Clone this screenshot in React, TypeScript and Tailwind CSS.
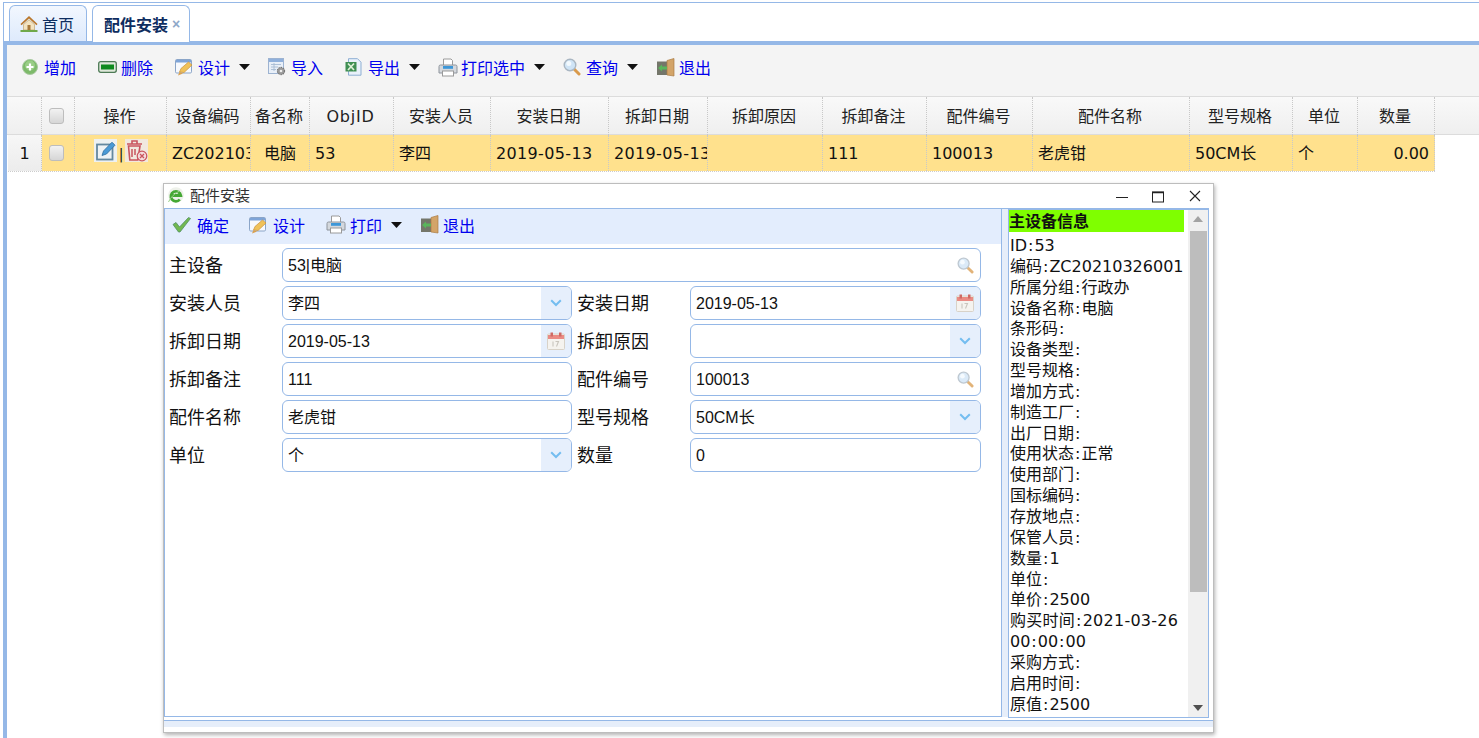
import React from "react";

const Caret = () => (
  <svg width="11" height="6" viewBox="0 0 11 6" className="shrink-0"><path d="M0 0h11L5.500 6z" fill="#111" /></svg>
);
const Home = () => (
  <svg width="18" height="18" viewBox="0 0 18 18"><path d="M9 1 0.500 9l1 1.200L9 3.500l7.500 6.700 1-1.200z" fill="#b9772c" /><path d="M3.500 9.500 9 4.800l5.500 4.700V15h-11z" fill="#f3e3c0" stroke="#b89a60" strokeWidth=".6" /><rect x="7.500" y="10" width="3" height="5" fill="#a8793a" /><path d="M0.500 15h17v2h-17z" fill="#6fa84a" /></svg>
);
const Plus = () => (
  <svg width="16" height="16" viewBox="0 0 16 16"><circle cx="8" cy="8" r="7.500" fill="#7dba6a" stroke="#a9c9a0" /><circle cx="8" cy="6.500" r="5" fill="#a5d593" opacity=".7" /><path d="M8 4.500v7M4.500 8h7" stroke="#fff" strokeWidth="2.200" /></svg>
);
const Minus = () => (
  <svg width="19" height="12" viewBox="0 0 19 12"><rect x=".7" y=".7" width="17.600" height="10.600" rx="2" fill="#dfe8da" stroke="#4d7a55" strokeWidth="1.300" /><rect x="3" y="3.500" width="13" height="5" fill="#0f8a1e" /></svg>
);
const Design = () => (
  <svg width="18" height="18" viewBox="0 0 18 18"><rect x=".5" y="1.500" width="16" height="13.500" rx="1.200" fill="#f7f9fd" stroke="#8ba5c8" /><rect x="1" y="2" width="15" height="2.500" fill="#7ea4d8" /><path d="M4.500 14 6 10.500 13.500 4l3.500 3-8 7.500z" fill="#f0c25a" stroke="#c9923c" strokeWidth=".7" /><path d="M3 17.500l1.500-3.500 3.500 1.500z" fill="#d9a050" /></svg>
);
const ImportI = () => (
  <svg width="18" height="18" viewBox="0 0 18 18"><rect x=".5" y=".5" width="15" height="15" fill="#e8eff8" stroke="#9db3d1" /><rect x="1" y="1" width="14" height="3" fill="#8fb0dc" /><path d="M3 6.500h10M3 9h7M3 11.500h5M6 5v8" stroke="#a7bbd4" strokeWidth=".9" /><circle cx="13" cy="13" r="3.600" fill="#9a9a9a" stroke="#777" strokeDasharray="1.500 .8" strokeWidth="1.100" /><circle cx="13" cy="13" r="1.300" fill="#eee" /></svg>
);
const Excel = () => (
  <svg width="18" height="18" viewBox="0 0 18 18"><path d="M3.500 .7h9l3.500 3.500v13h-12.500z" fill="#e9f1fa" stroke="#8daed3" /><path d="M0.500 4h11v9.500H0.500z" fill="#3f8f52" /><path d="M3 5.500l6 6.500M9 5.500l-6 6.500" stroke="#dff0d8" strokeWidth="1.700" /></svg>
);
const PrintI = () => (
  <svg width="20" height="19" viewBox="0 0 20 19"><path d="M5.500 1h7.500l1.500 1.500V8h-9z" fill="#fff" stroke="#9a9a9a" /><path d="M1 8.500q0-1.500 1.500-1.500h15q1.500 0 1.500 1.500V15H1z" fill="#d4d8dd" stroke="#8e949c" /><rect x="5" y="8" width="10" height="2.800" fill="#3d97d8" /><rect x="4.500" y="13" width="11" height="5" fill="#fff" stroke="#9a9a9a" /></svg>
);
const Search = ({ s = 18, o = 1 }: { s?: number; o?: number }) => (
  <svg width={s} height={s} viewBox="0 0 18 18" opacity={o}><path d="M10.800 10.800 16 16" stroke="#d99a4b" strokeWidth="3" strokeLinecap="round" /><circle cx="7" cy="7" r="5.800" fill="#cfe4f6" stroke="#a9b6c2" strokeWidth="1.400" /><circle cx="5.800" cy="5.500" r="2.500" fill="#f2f9fe" /></svg>
);
const Exit = () => (
  <svg width="19" height="19" viewBox="0 0 19 19"><rect x="1" y="3.500" width="11" height="13.500" fill="#74766a" /><path d="M11 2.500 18 .5V18l-7-1z" fill="#d3a468" stroke="#aa7d45" strokeWidth=".7" /><path d="M2 10l4-3.500v2h5v3H6v2z" fill="#59b55b" /></svg>
);
const Check = () => (
  <svg width="19" height="17" viewBox="0 0 19 17"><path d="M1 8.500l3-2 3.500 4.500L16.500 1.500l2 1L8 16h-1.500z" fill="#73b84f" stroke="#4f8f63" strokeWidth=".8" /></svg>
);
const Edit = () => (
  <svg width="23" height="23" viewBox="0 0 23 23"><rect width="23" height="23" fill="#edf1f2" /><rect x="3" y="5.500" width="15.500" height="15" fill="#eef3f6" stroke="#64889f" strokeWidth="1.800" /><path d="M8 16.500 9.500 12 18 3.200l3 3-8.500 8.800z" fill="#4a9ad6" stroke="#2f6d9e" strokeWidth=".8" /></svg>
);
const Trash = () => (
  <svg width="23" height="23" viewBox="0 0 23 23"><rect width="23" height="23" fill="#f1e9df" /><path d="M2 5h15M7 5V2h5v3" stroke="#c9545e" strokeWidth="1.600" fill="none" /><path d="M3.500 7l1.300 14h8L15 7z" fill="#f1e9df" stroke="#c9545e" strokeWidth="1.600" /><path d="M7 10v8M10 10v6" stroke="#c9545e" strokeWidth="1.500" /><circle cx="17" cy="17" r="4.800" fill="#f4dcdc" stroke="#c9545e" strokeWidth="1.200" /><path d="M15 15l4 4M19 15l-4 4" stroke="#c9545e" strokeWidth="1.300" /></svg>
);
const IE = () => (
  <svg width="16" height="16" viewBox="0 0 16 16"><circle cx="8" cy="8" r="7.800" fill="#eef1ea" /><path d="M2.800 8.500h10A5 5 0 1 0 11.800 12.500" fill="none" stroke="#45a834" strokeWidth="2.800" /><path d="M0.500 15q3-7 11-11" stroke="#9ad08a" fill="none" strokeWidth="1" /></svg>
);
const Calendar = () => (
  <svg width="18" height="18" viewBox="0 0 18 18"><rect x=".5" y="2" width="17" height="15.500" rx="1" fill="#f5f3ef" stroke="#d8d2c8" /><rect x="1" y="3" width="16" height="4" fill="#ea8b84" /><rect x="3.500" y=".5" width="2.500" height="4" fill="#cf6a64" /><rect x="12" y=".5" width="2.500" height="4" fill="#cf6a64" /><path d="M6 9.500v5M8.500 9.500h3l-2 5" stroke="#c9c5bd" strokeWidth="1.100" fill="none" /></svg>
);
const Chevron = () => (
  <svg width="12" height="8" viewBox="0 0 12 8"><path d="M1.200 1.200 6 6l4.800-4.800" stroke="#74bdf0" strokeWidth="2" fill="none" /></svg>
);

const TB = ({ x, icon, label, caret, w = 23 }: { x: number; icon: React.ReactNode; label: string; caret?: boolean; w?: number }) => (
  <div className="absolute top-0 h-full flex items-center text-[16px] text-[#0000ee] whitespace-nowrap" style={{ left: x }}>
    <span className="flex items-center shrink-0" style={{ width: w }}>{icon}</span>
    {label}
    {caret && <span className="ml-[9px] flex"><Caret /></span>}
  </div>
);

const cell = "border-r border-dotted border-[#c8c8c8] overflow-hidden whitespace-nowrap h-full flex items-center";
const txt = `${cell} pt-[2px]`;
const heads = ["", "", "操作", "设备编码", "备名称", "ObjID", "安装人员", "安装日期", "拆卸日期", "拆卸原因", "拆卸备注", "配件编号", "配件名称", "型号规格", "单位", "数量"];

const Field = ({ x, y, w, value, btn }: { x: number; y: number; w: number; value: string; btn?: "search" | "chev" | "cal" }) => (
  <div className="absolute h-[34px] flex items-center bg-white border border-[#95b8e7] rounded-[6px] overflow-hidden text-[16px] text-[#111] [font-family:Liberation_Sans,Noto_Sans_CJK_SC,sans-serif]" style={{ left: x, top: y, width: w }}>
    <span className="pl-[5px] pt-[2px] flex-1 whitespace-nowrap">{value}</span>
    {btn === "search" && <span className="w-[30px] h-full flex items-center justify-center"><Search s={17} o={0.75} /></span>}
    {btn === "chev" && <span className="w-[30px] h-full flex items-center justify-center bg-[#e6effc]"><Chevron /></span>}
    {btn === "cal" && <span className="w-[30px] h-full flex items-center justify-center bg-[#e6effc]"><Calendar /></span>}
  </div>
);

const Label = ({ x, y, t }: { x: number; y: number; t: string }) => (
  <div className="absolute h-[34px] flex items-center text-[18px] text-[#111] whitespace-nowrap" style={{ left: x, top: y - 1 }}>{t}</div>
);

const info = ["ID:53", "编码:ZC20210326001", "所属分组:行政办", "设备名称:电脑", "条形码:", "设备类型:", "型号规格:", "增加方式:", "制造工厂:", "出厂日期:", "使用状态:正常", "使用部门:", "国标编码:", "存放地点:", "保管人员:", "数量:1", "单位:", "单价:2500", "购买时间:2021-03-26", "00:00:00", "采购方式:", "启用时间:", "原值:2500"];

const Colons = ({ t }: { t: string }) => (
  <>
    {t.split(":").map((p, i) => (
      <React.Fragment key={i}>
        {i > 0 && <span className="px-[1px]">:</span>}
        {p}
      </React.Fragment>
    ))}
  </>
);

const Checkbox = () => <div className="w-[15px] h-[16px] rounded-[3px] border border-[#bdbdbd] bg-gradient-to-b from-[#f2f2f2] to-[#d6d6d6]" />;

const gridCols = "grid grid-cols-[34px_33px_92px_84px_59px_84px_97px_118px_99px_115px_104px_106px_157px_103px_65px_77px]";
const yellow = "bg-[#ffe18d]";

export default function App() {
  return (
    <div className="relative w-[1479px] h-[738px] overflow-hidden bg-white [font-family:Noto_Sans_CJK_SC,sans-serif] text-[#222]">
      {/* top and left frame */}
      <div className="absolute left-[3px] right-0 top-[2px] h-px bg-[#95b8e7]" />
      <div className="absolute left-[3px] top-[2px] bottom-0 w-px bg-[#95b8e7]" />
      {/* tabs */}
      <div className="absolute left-[9px] top-[5px] w-[78px] h-[36px] border border-b-0 border-[#95b8e7] rounded-t-[6px] bg-gradient-to-b from-[#f2f7fe] to-[#deeafc] flex items-center text-[16px] text-[#0e2d5f]">
        <span className="ml-[10px] w-[22px] flex"><Home /></span>首页
      </div>
      <div className="absolute left-[92px] top-[5px] w-[98px] h-[37px] border border-b-0 border-[#95b8e7] rounded-t-[6px] bg-white flex items-center text-[16px] font-bold text-[#0e2d5f] z-10">
        <span className="ml-[11px]">配件安装</span><span className="ml-[4px] text-[14px] text-[#8fa8c8] [font-family:Liberation_Sans,sans-serif]">×</span>
      </div>
      {/* main panel */}
      <div className="absolute left-[4px] right-0 top-[41px] h-[4px] bg-[#95b8e7]" />
      <div className="absolute left-[4px] top-[41px] bottom-0 w-[3px] bg-[#95b8e7]" />
      {/* toolbar */}
      <div className="absolute left-[7px] right-0 top-[45px] h-[52px] bg-[#f4f4f4] border-b border-[#dcdcdc]">
        <div className="absolute left-0 right-0 top-[4px] h-[36px]">
          <TB x={15} w={22} icon={<Plus />} label="增加" />
          <TB x={91} icon={<Minus />} label="删除" />
          <TB x={168} icon={<Design />} label="设计" caret />
          <TB x={261} icon={<ImportI />} label="导入" />
          <TB x={338} icon={<Excel />} label="导出" caret />
          <TB x={431} icon={<PrintI />} label="打印选中" caret />
          <TB x={556} icon={<Search />} label="查询" caret />
          <TB x={649} icon={<Exit />} label="退出" />
        </div>
      </div>
      {/* table header */}
      <div className="absolute left-[7px] right-0 top-[97px] h-[38px] bg-gradient-to-b from-[#f9f9f9] to-[#efefef] border-b border-[#dcdcdc]" />
      <div className={`absolute left-[8px] top-[97px] h-[38px] ${gridCols} text-[16px] text-[#222]`}>
        {heads.map((h, i) => (
          <div key={i} className={`${cell} justify-center ${i === 1 ? "pr-[3px]" : "pr-[2px]"} ${i === 1 ? "" : h === "ObjID" ? "pt-[1px] [font-family:DejaVu_Sans,Noto_Sans_CJK_SC,sans-serif] tracking-[0.8px]" : "pb-[2px]"}`}>
            {i === 1 ? <Checkbox /> : h}
          </div>
        ))}
      </div>
      {/* row */}
      <div className={`absolute left-[8px] top-[135px] h-[37px] ${gridCols} text-[16px] text-[#111] [font-family:DejaVu_Sans,Noto_Sans_CJK_SC,sans-serif] border-b border-dotted border-[#ccc]`}>
        <div className={`${txt} justify-center bg-gradient-to-b from-[#f7f7f7] to-[#ececec]`}>1</div>
        <div className={`${cell} justify-center pr-[3px] ${yellow}`}><Checkbox /></div>
        <div className={`${cell} ${yellow} items-start pl-[19px] pt-[4px]`}><Edit /><span className="text-[14px] mt-[5px] w-[8px] text-center">|</span><Trash /></div>
        <div className={`${txt} ${yellow} pl-[5px]`}>ZC20210326001</div>
        <div className={`${txt} ${yellow} justify-center`}>电脑</div>
        <div className={`${txt} ${yellow} pl-[5px]`}>53</div>
        <div className={`${txt} ${yellow} pl-[5px]`}>李四</div>
        <div className={`${txt} ${yellow} pl-[5px] tracking-[0.35px]`}>2019-05-13</div>
        <div className={`${txt} ${yellow} pl-[5px] tracking-[0.35px]`}>2019-05-13</div>
        <div className={`${cell} ${yellow}`} />
        <div className={`${txt} ${yellow} pl-[5px]`}>111</div>
        <div className={`${txt} ${yellow} pl-[5px]`}>100013</div>
        <div className={`${txt} ${yellow} pl-[5px]`}>老虎钳</div>
        <div className={`${txt} ${yellow} pl-[5px]`}>50CM长</div>
        <div className={`${txt} ${yellow} pl-[5px]`}>个</div>
        <div className={`${txt} ${yellow} justify-end pr-[5px]`}>0.00</div>
      </div>

      {/* dialog */}
      <div className="absolute left-[163px] top-[183px] w-[1051px] h-[550px] bg-white border border-[#bdbdbd] shadow-[1px_2px_4px_rgba(0,0,0,0.3)]">
        <div className="absolute left-[4px] top-[3px] flex items-center h-[16px] text-[15px] text-[#333]"><span className="w-[22px] flex"><IE /></span>配件安装</div>
        <svg className="absolute left-[952px] top-[7px]" width="12" height="12" viewBox="0 0 12 12"><path d="M0 6.500h12" stroke="#222" strokeWidth="1" /></svg>
        <svg className="absolute left-[988px] top-[7px]" width="13" height="12" viewBox="0 0 13 12"><rect x=".5" y="1" width="11" height="10" fill="none" stroke="#222" /><path d="M0 1.500h12" stroke="#222" strokeWidth="1.500" /></svg>
        <svg className="absolute left-[1025px] top-[6px]" width="12" height="12" viewBox="0 0 12 12"><path d="M1 1l10 10M11 1 1 11" stroke="#222" strokeWidth="1.100" /></svg>

        {/* body frame */}
        <div className="absolute left-0 top-[24px] w-[1045px] h-[509px] bg-[#e6eefa] border-t border-x border-[#95b8e7]" />
        {/* bottom band */}
        <div className="absolute left-0 top-[536px] w-[1049px] h-[7px] bg-[#e6eefa] border-t border-[#95b8e7]" />
        {/* left panel */}
        <div className="absolute left-[1px] top-[25px] w-[837px] h-[508px] bg-white border-r border-b border-[#95b8e7]">
          <div className="absolute left-0 top-0 w-full h-[35px] bg-[#e3edfd]">
            <div className="absolute left-0 top-0 w-full h-[31px]">
              <TB x={7} w={25} icon={<Check />} label="确定" />
              <TB x={84} w={24} icon={<Design />} label="设计" />
              <TB x={161} w={24} icon={<PrintI />} label="打印" caret />
              <TB x={255} icon={<Exit />} label="退出" />
            </div>
          </div>
        </div>
        <div className="absolute left-[-164px] top-[-184px] w-0 h-0">
          <Label x={169} y={248} t="主设备" />
          <Field x={282} y={248} w={699} value="53|电脑" btn="search" />
          <Label x={169} y={286} t="安装人员" />
          <Field x={282} y={286} w={290} value="李四" btn="chev" />
          <Label x={577} y={286} t="安装日期" />
          <Field x={690} y={286} w={291} value="2019-05-13" btn="cal" />
          <Label x={169} y={324} t="拆卸日期" />
          <Field x={282} y={324} w={290} value="2019-05-13" btn="cal" />
          <Label x={577} y={324} t="拆卸原因" />
          <Field x={690} y={324} w={291} value="" btn="chev" />
          <Label x={169} y={362} t="拆卸备注" />
          <Field x={282} y={362} w={290} value="111" />
          <Label x={577} y={362} t="配件编号" />
          <Field x={690} y={362} w={291} value="100013" btn="search" />
          <Label x={169} y={400} t="配件名称" />
          <Field x={282} y={400} w={290} value="老虎钳" />
          <Label x={577} y={400} t="型号规格" />
          <Field x={690} y={400} w={291} value="50CM长" btn="chev" />
          <Label x={169} y={438} t="单位" />
          <Field x={282} y={438} w={290} value="个" btn="chev" />
          <Label x={577} y={438} t="数量" />
          <Field x={690} y={438} w={291} value="0" />
        </div>
        {/* right panel */}
        <div className="absolute left-[844px] top-[25px] w-[201px] h-[509px] bg-white border border-[#95b8e7] overflow-hidden">
          <div className="absolute left-0 top-0 w-[175px] text-[16px] leading-[20.85px] text-[#111] [font-family:DejaVu_Sans,Noto_Sans_CJK_SC,sans-serif]">
            <div className="h-[22px] bg-[#7fff00] font-bold leading-[20px] [font-family:Noto_Sans_CJK_SC,sans-serif]">主设备信息</div>
            <div className="pl-[1px] pt-[4px] whitespace-nowrap">
              {info.map((t, i) => <div key={i} className={t.includes("-") ? "tracking-[0.25px]" : ""}><Colons t={t} /></div>)}
            </div>
          </div>
          <div className="absolute right-0 top-0 w-[20px] h-full bg-[#f0f0f0]">
            <svg className="absolute left-[5px] top-[6px]" width="10" height="6" viewBox="0 0 10 6"><path d="M5 0l5 6H0z" fill="#a3a3a3" /></svg>
            <div className="absolute left-[2px] top-[21px] w-[17px] h-[361px] bg-[#bdbdbd]" />
            <svg className="absolute left-[5px] bottom-[6px]" width="10" height="6" viewBox="0 0 10 6"><path d="M0 0h10L5 6z" fill="#505050" /></svg>
          </div>
        </div>
      </div>
    </div>
  );
}
